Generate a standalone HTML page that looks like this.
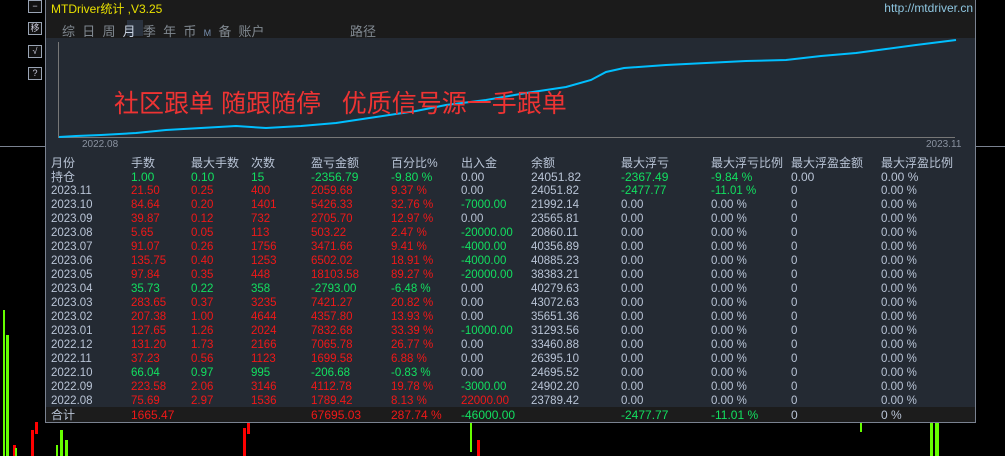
<!DOCTYPE html><html><head><meta charset="utf-8"><style>
body{margin:0;width:1005px;height:456px;background:#000;overflow:hidden;position:relative;font-family:"Liberation Sans","Noto Sans CJK SC",sans-serif;}
.a{position:absolute;white-space:nowrap}
.p{position:absolute;left:45px;top:0;width:929px;height:422px;background:#242a33;border-left:1px solid #7a8290;border-right:1px solid #7a8290;border-bottom:1px solid #7a8290}
.hd{position:absolute;left:0;top:0;width:929px;height:38px;background:#1b1b1b}
.r{position:absolute;left:0;width:929px;height:14px;font-size:11.5px;line-height:14px;color:#b9c4d6}
.r span{position:absolute;top:0}
.R{color:#f01818!important}.G{color:#12e060!important}
.btn{position:absolute;left:28px;width:12px;height:11px;border:1px solid #9aa4b4;color:#ccd;font-size:9px;line-height:11px;text-align:center;background:#111}
</style></head><body>
<div class="a" style="left:0;top:146px;width:1005px;height:1px;background:#7a8290"></div>
<svg class="a" style="left:0;top:300px" width="1005" height="156">
<rect x="3" y="10" width="2" height="146" fill="#6f0"/><rect x="6" y="35" width="3" height="121" fill="#6f0"/>
<rect x="13" y="145" width="3" height="11" fill="#f00"/><rect x="15" y="148" width="2" height="8" fill="#6f0"/>
<rect x="31" y="130" width="3" height="26" fill="#f00"/><rect x="35" y="122" width="3" height="12" fill="#f00"/>
<rect x="56" y="145" width="2" height="11" fill="#6f0"/><rect x="60" y="130" width="3" height="26" fill="#6f0"/>
<rect x="65" y="140" width="3" height="16" fill="#6f0"/>
<rect x="243" y="128" width="3" height="28" fill="#f00"/><rect x="247" y="122" width="3" height="12" fill="#f00"/>
<rect x="470" y="122" width="2" height="30" fill="#6f0"/><rect x="477" y="140" width="3" height="16" fill="#f00"/>
<rect x="860" y="122" width="2" height="10" fill="#6f0"/>
<rect x="930" y="122" width="3" height="34" fill="#6f0"/><rect x="935" y="122" width="4" height="34" fill="#6f0"/>
</svg>
<div class="btn" style="top:0">−</div><div class="btn" style="top:22px">移</div>
<div class="btn" style="top:45px">√</div><div class="btn" style="top:67px">?</div>
<div class="p">
<div class="hd"></div>
<div class="a" style="left:5px;top:0;font-size:12px;color:#e8e000">MTDriver统计 ,V3.25</div>
<div class="a" style="right:2px;top:1px;font-size:12px;color:#8ec6e0">http://mtdriver.cn</div>
<div class="a" style="left:81px;top:20px;width:16px;height:16px;background:#2a323e"></div>
<div class="a" style="left:16px;top:21px;font-size:13px;color:#808890;word-spacing:0">综&nbsp; 日&nbsp; 周&nbsp; <span style="color:#c6d0e0">月</span>&nbsp; 季&nbsp; 年&nbsp; 币&nbsp; <span style="font-size:9px;color:#7890b0">M</span>&nbsp; 备&nbsp; 账户</div>
<div class="a" style="left:304px;top:21px;font-size:13px;color:#808890">路径</div>
<div class="a" style="left:12px;top:42px;width:1px;height:96px;background:#777"></div>
<div class="a" style="left:12px;top:137px;width:897px;height:1px;background:#777"></div>
<div class="a" style="left:36px;top:139px;font-size:10px;color:#8a92a0">2022.08</div>
<div class="a" style="left:880px;top:139px;font-size:10px;color:#8a92a0">2023.11</div>
<svg class="a" style="left:0;top:0" width="929" height="150"><polyline fill="none" stroke="#00bfff" stroke-width="2" points="13,137 30,136 55,135 90,133 120,130 155,128 190,126 220,128 255,126 290,123 330,117 370,111 400,105 440,100 480,93 520,87 545,80 560,72 578,68 620,65 660,63 700,61 740,60 775,56 810,53 840,49 870,45 910,40"/></svg>
<div class="a" style="left:68px;top:84px;font-size:25px;color:#ee3333">社区跟单 随跟随停&nbsp;&nbsp; 优质信号源一手跟单</div>
<div class="a" style="left:0;top:407px;width:929px;height:15px;background:#1c1c1c"></div>
<div id="t"></div>
</div>
<script>
var X=[5,85,145,205,265,345,415,485,575,665,745,835];
var rows=[
["月份","手数","最大手数","次数","盈亏金额","百分比%","出入金","余额","最大浮亏","最大浮亏比例","最大浮盈金额","最大浮盈比例","h"],
["持仓","1.00","0.10","15","-2356.79","-9.80 %","0.00","24051.82","-2367.49","-9.84 %","0.00","0.00 %","p"],
["2023.11","21.50","0.25","400","2059.68","9.37 %","0.00","24051.82","-2477.77","-11.01 %","0","0.00 %"],
["2023.10","84.64","0.20","1401","5426.33","32.76 %","-7000.00","21992.14","0.00","0.00 %","0","0.00 %"],
["2023.09","39.87","0.12","732","2705.70","12.97 %","0.00","23565.81","0.00","0.00 %","0","0.00 %"],
["2023.08","5.65","0.05","113","503.22","2.47 %","-20000.00","20860.11","0.00","0.00 %","0","0.00 %"],
["2023.07","91.07","0.26","1756","3471.66","9.41 %","-4000.00","40356.89","0.00","0.00 %","0","0.00 %"],
["2023.06","135.75","0.40","1253","6502.02","18.91 %","-4000.00","40885.23","0.00","0.00 %","0","0.00 %"],
["2023.05","97.84","0.35","448","18103.58","89.27 %","-20000.00","38383.21","0.00","0.00 %","0","0.00 %"],
["2023.04","35.73","0.22","358","-2793.00","-6.48 %","0.00","40279.63","0.00","0.00 %","0","0.00 %"],
["2023.03","283.65","0.37","3235","7421.27","20.82 %","0.00","43072.63","0.00","0.00 %","0","0.00 %"],
["2023.02","207.38","1.00","4644","4357.80","13.93 %","0.00","35651.36","0.00","0.00 %","0","0.00 %"],
["2023.01","127.65","1.26","2024","7832.68","33.39 %","-10000.00","31293.56","0.00","0.00 %","0","0.00 %"],
["2022.12","131.20","1.73","2166","7065.78","26.77 %","0.00","33460.88","0.00","0.00 %","0","0.00 %"],
["2022.11","37.23","0.56","1123","1699.58","6.88 %","0.00","26395.10","0.00","0.00 %","0","0.00 %"],
["2022.10","66.04","0.97","995","-206.68","-0.83 %","0.00","24695.52","0.00","0.00 %","0","0.00 %"],
["2022.09","223.58","2.06","3146","4112.78","19.78 %","-3000.00","24902.20","0.00","0.00 %","0","0.00 %"],
["2022.08","75.69","2.97","1536","1789.42","8.13 %","22000.00","23789.42","0.00","0.00 %","0","0.00 %"],
["合计","1665.47","","","67695.03","287.74 %","-46000.00","","-2477.77","-11.01 %","0","0 %"]];
var h="";
rows.forEach(function(r,i){
 var y=156+i*14;
 h+='<div class="r" style="top:'+y+'px'+(i<2||i==18?';font-size:12px':'')+'">';
 r.slice(0,12).forEach(function(c,j){
  var cl="";
  if(i>0&&j>=1&&j<=5){cl=(r[4][0]=="-")?"G":"R";}
  if(i>0&&j==6&&c[0]=="-")cl="G";
  if(i>0&&j==6&&c=="22000.00")cl="R";
  if(i>0&&(j==8||j==9)&&c[0]=="-")cl="G";
  h+='<span class="'+cl+'" style="left:'+X[j]+'px">'+c+'</span>';
 });
 h+='</div>';
});
document.getElementById("t").innerHTML=h;
</script>
</body></html>
